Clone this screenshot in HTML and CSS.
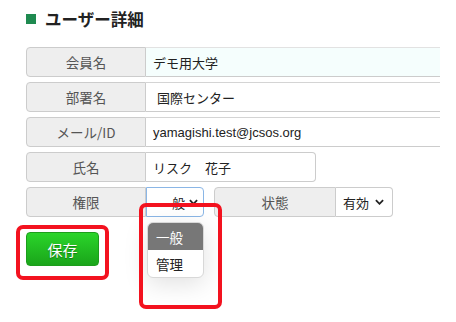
FILE: index.html
```html
<!DOCTYPE html>
<html lang="ja">
<head>
<meta charset="utf-8">
<link rel="stylesheet" href="styles.css">
</head>
<body>
<div class="page">
  <h1 class="title"><span class="mark"></span>ユーザー詳細</h1>
  <div class="form">
    <div class="row">
      <div class="label">会員名</div>
      <div class="field field-wide field-fill">デモ用大学</div>
    </div>
    <div class="row">
      <div class="label">部署名</div>
      <div class="field field-wide field-indent">国際センター</div>
    </div>
    <div class="row">
      <div class="label">メール/ID</div>
      <div class="field field-wide latin">yamagishi.test@jcsos.org</div>
    </div>
    <div class="row">
      <div class="label">氏名</div>
      <div class="field field-box field-name">リスク　花子</div>
    </div>
    <div class="row">
      <div class="label">権限</div>
      <div class="field field-box select select-focus">一般<svg class="chev" viewBox="0 0 10 6"><path d="M1 1 L5 5 L9 1" /></svg></div>
      <div class="label label-second">状態</div>
      <div class="field field-box select">有効<svg class="chev" viewBox="0 0 10 6"><path d="M1 1 L5 5 L9 1" /></svg></div>
    </div>
  </div>
  <div class="actions">
    <button class="save">保存</button>
  </div>
</div>
<div class="menu">
  <div class="opt opt-active">一般</div>
  <div class="opt">管理</div>
</div>
<div class="mark-box box-save"></div>
<div class="mark-box box-menu"></div>
</body>
</html>
```

FILE: styles.css
```css
html, body {
  margin: 0;
  padding: 0;
  background: #fff;
}
body {
  font-family: "Noto Sans CJK JP", "Noto Sans", sans-serif;
  width: 456px;
  height: 322px;
  overflow: hidden;
  position: relative;
}
.page {
  padding: 9px 0 0 26px;
}
.title {
  margin: 0;
  display: flex;
  align-items: center;
  gap: 9px;
  font-size: 16.5px;
  font-weight: bold;
  color: #222;
  height: 20px;
  line-height: 20px;
}
.mark {
  width: 10px;
  height: 10px;
  background: #1f8a50;
}
.form {
  margin-top: 18px;
  display: flex;
  flex-direction: column;
  gap: 5px;
}
.row {
  display: flex;
  height: 30px;
}
.label {
  box-sizing: border-box;
  width: 120px;
  height: 30px;
  background: #eeeeee;
  border: 1px solid #cccccc;
  border-radius: 4px 0 0 4px;
  display: flex;
  align-items: center;
  justify-content: center;
  font-size: 13.5px;
  color: #555;
}
.label-second {
  margin-left: 10px;
  width: 122px;
}
.field {
  box-sizing: border-box;
  height: 30px;
  display: flex;
  align-items: center;
  padding-left: 7px;
  font-size: 13px;
  color: #222;
  white-space: nowrap;
}
.field-wide {
  width: 294px;
  border-top: 1px solid #d4d4d4;
  border-bottom: 1px solid #cccccc;
}
.field-fill {
  background: #f5fefd;
  border-top-color: #e2e2e2;
}
.field-indent {
  padding-left: 11px;
}
.latin {
  font-family: "Liberation Sans", Arial, sans-serif;
}
.field-box {
  border: 1px solid #cccccc;
  border-left: none;
  border-radius: 0 4px 4px 0;
}
.field-name {
  width: 170px;
}
.select {
  width: 57px;
  padding-left: 7px;
  gap: 6px;
}
.select-focus {
  width: 58px;
  padding-left: 12px;
  gap: 4px;
  border: 1px solid #8ab6e6;
  border-radius: 0 4px 4px 0;
}
.chev {
  flex: none;
  width: 9px;
  height: 6px;
  fill: none;
  stroke: #222;
  stroke-width: 2;
}
.actions {
  margin-top: 15px;
  display: flex;
}
.save {
  width: 73px;
  height: 34px;
  border: 1px solid #1c9d1c;
  border-radius: 4px;
  background: linear-gradient(#2ad52a, #1aa51a);
  color: #fff;
  font-family: "Noto Sans CJK JP", sans-serif;
  font-size: 15px;
  text-shadow: 0 1px 1px rgba(0,0,0,0.35);
  padding: 0;
}
.menu {
  position: absolute;
  left: 147px;
  top: 222px;
  width: 57px;
  border-radius: 6px;
  overflow: hidden;
  background: #fff;
  border: 1px solid #d8d8d8;
  box-sizing: border-box;
  box-shadow: 0 6px 24px rgba(0,0,0,0.12);
}
.opt {
  height: 27px;
  display: flex;
  align-items: center;
  padding-left: 8px;
  font-size: 13.5px;
  color: #222;
}
.opt-active {
  background: #777;
  color: #fff;
}
.mark-box {
  position: absolute;
  box-sizing: border-box;
  border: 4px solid #f3121f;
  border-radius: 7px;
}
.box-save {
  left: 16px;
  top: 225px;
  width: 93px;
  height: 55px;
}
.box-menu {
  left: 139px;
  top: 203px;
  width: 83px;
  height: 106px;
}
```
